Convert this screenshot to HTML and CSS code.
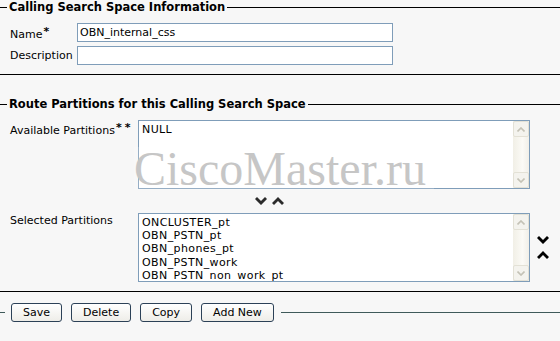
FILE: index.html
```html
<!DOCTYPE html>
<html>
<head>
<meta charset="utf-8">
<title>Calling Search Space</title>
<link rel="stylesheet" href="styles.css">
</head>
<body>
<div class="page">
  <fieldset class="group group-info">
    <legend class="group-title">Calling Search Space Information</legend>
    <div class="form-grid">
      <label class="field-label" for="css-name">Name<span class="req">*</span></label>
      <input class="text-input" id="css-name" type="text" value="OBN_internal_css">
      <label class="field-label" for="css-desc">Description</label>
      <input class="text-input" id="css-desc" type="text" value="">
    </div>
  </fieldset>

  <fieldset class="group group-partitions">
    <legend class="group-title">Route Partitions for this Calling Search Space</legend>
    <div class="part-grid">
      <div class="part-label">Available Partitions<span class="req req-double">**</span></div>
      <div class="listbox">
        <div class="list-items">
          <div class="list-item">NULL</div>
        </div>
        <div class="scrollbar">
          <div class="scroll-btn"><svg viewBox="0 0 8 5" class="scroll-arrow"><polyline points="0.5,4.5 4,1 7.5,4.5"/></svg></div>
          <div class="scroll-btn"><svg viewBox="0 0 8 5" class="scroll-arrow"><polyline points="0.5,0.5 4,4 7.5,0.5"/></svg></div>
        </div>
      </div>
      <div></div>

      <div class="move-row">
        <svg class="chevron chevron-mid" viewBox="0 0 12 8"><polygon points="0,2 2,0 6,4 10,0 12,2 6,8"/></svg>
        <svg class="chevron chevron-mid" viewBox="0 0 12 8"><polygon points="0,6 2,8 6,4 10,8 12,6 6,0"/></svg>
      </div>
      <div></div>

      <div class="part-label">Selected Partitions</div>
      <div class="listbox">
        <div class="list-items">
          <div class="list-item">ONCLUSTER_pt</div>
          <div class="list-item">OBN_PSTN_pt</div>
          <div class="list-item">OBN_phones_pt</div>
          <div class="list-item">OBN_PSTN_work</div>
          <div class="list-item">OBN_PSTN_non_work_pt</div>
        </div>
        <div class="scrollbar">
          <div class="scroll-btn"><svg viewBox="0 0 8 5" class="scroll-arrow"><polyline points="0.5,4.5 4,1 7.5,4.5"/></svg></div>
          <div class="scroll-btn"><svg viewBox="0 0 8 5" class="scroll-arrow"><polyline points="0.5,0.5 4,4 7.5,0.5"/></svg></div>
        </div>
      </div>
      <div class="order-arrows">
        <svg class="chevron" viewBox="0 0 12 8"><polygon points="0,2 2,0 6,4 10,0 12,2 6,8"/></svg>
        <svg class="chevron" viewBox="0 0 12 8"><polygon points="0,6 2,8 6,4 10,8 12,6 6,0"/></svg>
      </div>
    </div>
  </fieldset>

  <fieldset class="button-bar">
    <legend class="button-legend">
      <button class="btn" type="button">Save</button>
      <button class="btn" type="button">Delete</button>
      <button class="btn" type="button">Copy</button>
      <button class="btn" type="button">Add New</button>
    </legend>
  </fieldset>

  <div class="watermark">CiscoMaster.ru</div>
</div>
</body>
</html>
```
FILE: styles.css
```css
html, body {
  margin: 0;
  padding: 0;
  background: #f7f7f7;
}

body {
  font-family: "DejaVu Sans", Verdana, sans-serif;
  font-size: 11px;
  color: #000;
}

.page {
  position: relative;
  width: 560px;
  height: 341px;
  overflow: hidden;
}

/* ---------- fieldset groups ---------- */
.group {
  margin: 0;
  padding: 8px 0 9px 7px;
  border: none;
  border-top: 1px solid #000;
  border-bottom: 1px solid #000;
  min-width: 0;
}

.group-partitions {
  margin-top: 22px;
}

.group-title {
  padding: 0 2px;
  font-weight: bold;
  font-size: 11.5px;
  line-height: 15px;
}

/* ---------- name / description ---------- */
.form-grid {
  display: grid;
  grid-template-columns: 67px 316px;
  row-gap: 4px;
  padding-left: 3px;
  align-items: center;
}

.field-label {
  line-height: 13px;
}

.req {
  display: inline-block;
  vertical-align: 3px;
  margin-left: 1px;
  font-weight: bold;
}

.req-double {
  letter-spacing: 3px;
}

.text-input {
  box-sizing: border-box;
  width: 316px;
  height: 19px;
  margin: 0;
  padding: 0 2px;
  border: 1px solid #7f9db9;
  background: #fff;
  font-family: "DejaVu Sans", Verdana, sans-serif;
  font-size: 11px;
  color: #000;
  outline: none;
}

/* ---------- partitions ---------- */
.part-grid {
  display: grid;
  grid-template-columns: 128px 392px 30px;
  grid-template-rows: 69px 24px 69px;
  padding-left: 3px;
}

.part-label {
  line-height: 13px;
  padding-top: 1px;
}

.listbox {
  box-sizing: border-box;
  display: flex;
  height: 69px;
  border: 1px solid #7f9db9;
  background: #fff;
}

.list-items {
  flex: 1;
  padding: 2px 3px 0;
  overflow: hidden;
  line-height: 13.2px;
  letter-spacing: 0.4px;
  white-space: nowrap;
}

.scrollbar {
  width: 16px;
  display: flex;
  flex-direction: column;
  justify-content: space-between;
  background: linear-gradient(to right, #f1efe6, #fbfaf6 60%, #f1efe8);
}

.scroll-btn {
  box-sizing: border-box;
  width: 16px;
  height: 16px;
  border: 1px solid #e3e1d6;
  border-radius: 2px;
  background: #f4f3ee;
  display: flex;
  align-items: center;
  justify-content: center;
}

.scroll-arrow {
  width: 8px;
  height: 5px;
  fill: none;
  stroke: #c4c2b6;
  stroke-width: 1.6;
}

.move-row {
  grid-column: 1 / 3;
  display: flex;
  justify-content: center;
  align-items: center;
  gap: 5px;
  padding-right: 2px;
}

.chevron {
  width: 12px;
  height: 8px;
  fill: #000;
}

.chevron-mid {
  fill: #2b2b2b;
}

.order-arrows {
  display: flex;
  flex-direction: column;
  justify-content: center;
  gap: 7px;
  padding-left: 7px;
}

/* ---------- buttons ---------- */
.button-bar {
  margin: 11px 0 0;
  padding: 0 0 0 5px;
  border: none;
  border-top: 1px solid #3f5a5a;
  min-width: 0;
}

.button-legend {
  display: flex;
  gap: 9px;
  padding: 0 7px 0 6px;
}

.btn {
  box-sizing: border-box;
  height: 19px;
  margin: 0;
  padding: 0 11px;
  border: 1px solid #2c4157;
  border-radius: 3px;
  background: linear-gradient(#ffffff, #eeede8);
  font-family: "DejaVu Sans", Verdana, sans-serif;
  font-size: 11px;
  line-height: 17px;
  color: #000;
}

/* ---------- watermark overlay ---------- */
.watermark {
  position: absolute;
  left: 134px;
  top: 147px;
  padding-right: 8px;
  font-family: "Liberation Serif", "Times New Roman", serif;
  font-size: 48px;
  line-height: 43px;
  color: #c6c6c6;
  background: rgba(255, 255, 255, 0.18);
  pointer-events: none;
}
```
